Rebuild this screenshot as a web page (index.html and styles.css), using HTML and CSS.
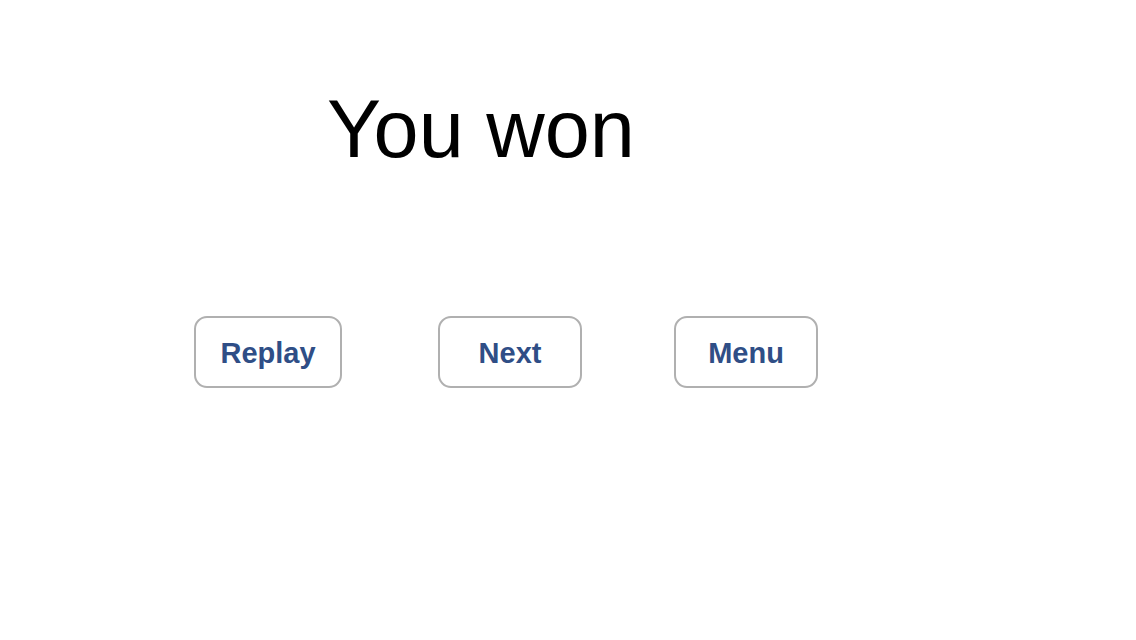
FILE: index.html
```html
<!DOCTYPE html>
<html>
<head>
<meta charset="utf-8">
<link rel="stylesheet" href="styles.css">
</head>
<body>
<div class="screen">
  <h1 class="title">You won</h1>
  <div class="buttons">
    <button class="btn btn-replay">Replay</button>
    <button class="btn btn-next">Next</button>
    <button class="btn btn-menu">Menu</button>
  </div>
</div>
</body>
</html>
```
FILE: styles.css
```css
html, body {
  margin: 0;
  padding: 0;
  background: #ffffff;
}
.screen {
  width: 1136px;
  height: 640px;
  font-family: "Liberation Sans", Arial, sans-serif;
}
.title {
  margin: 0;
  padding: 89px 0 0 327px;
  font-size: 81px;
  line-height: 80px;
  font-weight: normal;
  color: #000;
}
.buttons {
  display: flex;
  margin-top: 147px;
  padding-left: 194px;
}
.btn {
  box-sizing: border-box;
  height: 72px;
  border: 2px solid #b0b0b0;
  border-radius: 13px;
  background: #fff;
  font-family: "Liberation Sans", Arial, sans-serif;
  font-weight: bold;
  font-size: 29px;
  color: #2f4e86;
  display: flex;
  align-items: center;
  justify-content: center;
  padding: 3px 0 0 0;
}
.btn-replay { width: 148px; }
.btn-next { width: 144px; margin-left: 96px; }
.btn-menu { width: 144px; margin-left: 92px; }
```
